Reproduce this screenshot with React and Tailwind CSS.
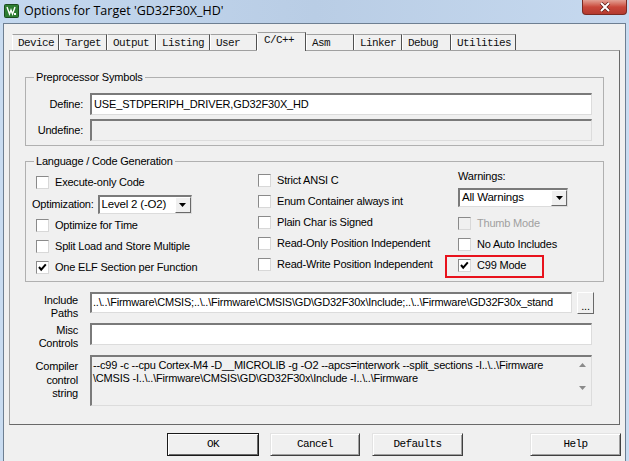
import React from "react";

const sunken =
  "border-t-2 border-l-2 border-r border-b border-t-[#7a7a7a] border-l-[#7a7a7a] border-r-[#dcdcdc] border-b-[#dcdcdc]";
const raised =
  "border border-t-[#ffffff] border-l-[#ffffff] border-r-[#696969] border-b-[#696969]";

const tabs = [
  { label: "Device", w: "w-[47px]" },
  { label: "Target", w: "w-[48px]" },
  { label: "Output", w: "w-[49px]" },
  { label: "Listing", w: "w-[54px]" },
  { label: "User", w: "w-[47px]" },
  { label: "C/C++", w: "w-[49px]", active: true },
  { label: "Asm", w: "w-[48px]" },
  { label: "Linker", w: "w-[48px]" },
  { label: "Debug", w: "w-[49px]" },
  { label: "Utilities", w: "w-[65px]" },
];

function Check({ checked = false, disabled = false, label }) {
  return (
    <div className="flex items-center h-[21px] gap-[6px]">
      <span
        className={`relative w-[13px] h-[13px] shrink-0 border border-t-[#8a8a8a] border-l-[#8a8a8a] border-r-[#d8d8d8] border-b-[#d8d8d8] ${
          disabled ? "bg-[#f0f0f0]" : "bg-white"
        }`}
      >
        {checked && (
          <svg viewBox="0 0 11 11" className="absolute inset-0 w-[11px] h-[11px]">
            <polyline points="2,5 4.2,7.6 8.8,2.4" fill="none" stroke="#000" strokeWidth="2" />
          </svg>
        )}
      </span>
      <span className={disabled ? "text-[#a0a0a0]" : "text-black"}>{label}</span>
    </div>
  );
}

function Select({ value, className }) {
  return (
    <div className={`flex h-[19px] bg-white ${sunken} ${className}`}>
      <span className="flex-1 pl-[2px] leading-[15px] text-[11.5px] tracking-[-0.2px]">{value}</span>
      <span className={`w-[16px] h-full bg-[#f0f0f0] flex items-center justify-center ${raised}`}>
        <svg viewBox="0 0 7 4" className="w-[7px] h-[4px]">
          <polygon points="0,0 7,0 3.5,4" fill="#000" />
        </svg>
      </span>
    </div>
  );
}

function Button({ label, w, def }) {
  return (
    <div
      className={`${w} h-[23px] flex items-center justify-center bg-[#f0f0f0] border font-['Liberation_Mono',monospace] text-[11px] tracking-[-0.6px] ${
        def
          ? "border-[#1a1a1a] shadow-[inset_1px_1px_0_#ffffff,inset_-1px_-1px_0_#696969]"
          : "border-t-[#e3e3e3] border-l-[#e3e3e3] border-r-[#404040] border-b-[#404040] shadow-[inset_1px_1px_0_#ffffff,inset_-1px_-1px_0_#a0a0a0]"
      }`}
    >
      {label}
    </div>
  );
}

export default function App() {
  return (
    <div className="w-[629px] h-[461px] overflow-hidden flex flex-col bg-[#c9dcf1] font-['Liberation_Sans',Arial,sans-serif] text-[11px] tracking-[-0.2px] text-black">
      {/* title bar */}
      <div className="h-[23px] shrink-0 flex items-start bg-gradient-to-r from-[#c4d8ef] via-[#b9cde5] to-[#c6d9ef]">
        <svg viewBox="0 0 15 14" className="ml-[4px] mt-[4px] w-[15px] h-[14px]">
          <rect x="0.5" y="0.5" width="14" height="13" rx="1" fill="#2e7d32" stroke="#1b4d1e" />
          <path d="M3 3 L5.5 10 L7 6 L8.5 10 L11 3" fill="none" stroke="#fff" strokeWidth="1.4" />
          <rect x="10" y="9" width="2" height="2" fill="#fff" />
        </svg>
        <span className="ml-[5px] mt-[2px] font-['Open_Sans',sans-serif] text-[12.5px] tracking-normal leading-[18px] text-black">
          Options for Target 'GD32F30X_HD'
        </span>
        <div className="ml-auto mr-[2px] w-[45px] h-[15px] rounded-b-[4px] border border-t-0 border-[#7a2a22] bg-gradient-to-b from-[#e2a095] via-[#c9473b] to-[#b43a2f] flex items-center justify-center">
          <svg viewBox="0 0 12 10" className="w-[12px] h-[10px]">
            <path d="M2 1 L10 9 M10 1 L2 9" stroke="#5a1a14" strokeWidth="3.4" />
            <path d="M2 1 L10 9 M10 1 L2 9" stroke="#fff" strokeWidth="2" />
          </svg>
        </div>
      </div>

      {/* client */}
      <div className="flex-1 mx-[3px] bg-[#f0f0f0] border-t border-x border-[#6e7f92] flex flex-col">
        {/* tabs */}
        <div className="mt-[8px] ml-[8px] h-[18px] flex items-end font-['Liberation_Mono',monospace] text-[11px] tracking-[-0.6px] text-[#111]">
          {tabs.map((t) =>
            t.active ? (
              <div
                key={t.label}
                className={`${t.w} relative z-10 -mb-px h-[19px] pl-[6px] pt-[1px] leading-[13px] bg-[#f0f0f0] border-t border-l border-r border-t-[#a0a0a0] border-l-[#ffffff] border-r-[#505050]`}
              >
                {t.label}
              </div>
            ) : (
              <div
                key={t.label}
                className={`${t.w} h-[16px] pl-[5px] pt-[1px] leading-[14px] border-t border-l border-r border-t-[#a0a0a0] border-l-[#ffffff] border-r-[#505050]`}
              >
                {t.label}
              </div>
            )
          )}
        </div>

        {/* panel */}
        <div className="mx-[5px] h-[375px] border border-t-[#a0a0a0] border-l-[#a0a0a0] border-r-[#696969] border-b-[#696969] flex flex-col">
          {/* Preprocessor Symbols */}
          <fieldset className="mx-[15px] mt-[20px] border border-[#b0b0b0] pb-[4px]">
            <legend className="ml-[8px] px-[2px] leading-[13px]">Preprocessor Symbols</legend>
            <div className="pt-[9px] flex flex-col gap-[4px]">
              <div className="flex items-center">
                <span className="w-[57px] text-right">Define:</span>
                <div className={`ml-[7px] w-[502px] h-[22px] bg-white ${sunken} pl-[2px] leading-[18px] text-[11px] tracking-[-0.15px]`}>
                  USE_STDPERIPH_DRIVER,GD32F30X_HD
                </div>
              </div>
              <div className="flex items-center">
                <span className="w-[57px] text-right">Undefine:</span>
                <div className={`ml-[7px] w-[502px] h-[22px] bg-[#f0f0f0] ${sunken}`} />
              </div>
            </div>
          </fieldset>

          {/* Language / Code Generation */}
          <fieldset className="mx-[15px] mt-[9px] border border-[#b0b0b0] pb-[3px]">
            <legend className="ml-[8px] px-[2px] leading-[13px]">Language / Code Generation</legend>
            <div className="flex">
              <div className="w-[232px] pl-[6px] pt-[4px] flex flex-col">
                <div className="pl-[4px]">
                  <Check label="Execute-only Code" />
                </div>
                <div className="h-[22px] flex items-center gap-[4px]">
                  <span>Optimization:</span>
                  <Select value="Level 2 (-O2)" className="w-[94px]" />
                </div>
                <div className="pl-[4px]">
                  <Check label="Optimize for Time" />
                  <Check label="Split Load and Store Multiple" />
                  <Check checked label="One ELF Section per Function" />
                </div>
              </div>
              <div className="w-[200px] pt-[2px] flex flex-col">
                <Check label="Strict ANSI C" />
                <Check label="Enum Container always int" />
                <Check label="Plain Char is Signed" />
                <Check label="Read-Only Position Independent" />
                <Check label="Read-Write Position Independent" />
              </div>
              <div className="flex-1 pt-[2px] flex flex-col">
                <span className="leading-[13px]">Warnings:</span>
                <Select value="All Warnings" className="mt-[5px] w-[110px]" />
                <div className="mt-[6px]">
                  <Check disabled label="Thumb Mode" />
                  <Check label="No Auto Includes" />
                  <div className="relative">
                    <Check checked label="C99 Mode" />
                    <span className="absolute -left-[13px] top-0 w-[99px] h-[23px] border-2 border-[#e8121c]" />
                  </div>
                </div>
              </div>
            </div>
          </fieldset>

          {/* include / misc / compiler */}
          <div className="mx-[15px] mt-[10px] flex flex-col">
            <div className="h-[22px] flex items-start gap-[12px]">
              <span className="w-[53px] mt-[2px] text-right leading-[13px]">
                Include
                <br />
                Paths
              </span>
              <div className={`w-[482px] h-[21px] bg-white ${sunken} pl-[1px] leading-[17px] whitespace-nowrap overflow-hidden`}>
                ..\..\Firmware\CMSIS;..\..\Firmware\CMSIS\GD\GD32F30x\Include;..\..\Firmware\GD32F30x_stand
              </div>
              <div className="-ml-[7px] w-[17px] h-[22px] bg-[#f0f0f0] flex items-end justify-center pb-[3px] leading-[8px] border border-t-[#ffffff] border-l-[#ffffff] border-r-[#696969] border-b-[#696969]">
                ...
              </div>
            </div>
            <div className="mt-[9px] h-[22px] flex items-start gap-[12px]">
              <span className="w-[53px] mt-[1px] text-right leading-[13px]">
                Misc
                <br />
                Controls
              </span>
              <div className={`w-[502px] h-[22px] bg-white ${sunken}`} />
            </div>
            <div className="mt-[10px] flex items-start gap-[12px]">
              <span className="w-[53px] mt-[5px] text-right leading-[13.5px]">
                Compiler
                <br />
                control
                <br />
                string
              </span>
              <div className={`w-[502px] h-[51px] bg-[#f0f0f0] ${sunken} flex`}>
                <div className="flex-1 pl-[1px] pt-[2px] leading-[13px] whitespace-pre overflow-hidden">
                  {"--c99 -c --cpu Cortex-M4 -D__MICROLIB -g -O2 --apcs=interwork --split_sections -I..\\..\\Firmware\n\\CMSIS -I..\\..\\Firmware\\CMSIS\\GD\\GD32F30x\\Include -I..\\..\\Firmware"}
                </div>
                <div className="w-[17px] flex flex-col items-center pt-[6px]">
                  <svg viewBox="0 0 7 4" className="w-[7px] h-[4px]">
                    <polygon points="0,4 7,4 3.5,0" fill="#8a8a8a" />
                  </svg>
                  <svg viewBox="0 0 7 4" className="mt-[19px] w-[7px] h-[4px]">
                    <polygon points="0,0 7,0 3.5,4" fill="#8a8a8a" />
                  </svg>
                </div>
              </div>
            </div>
          </div>
        </div>

        {/* buttons */}
        <div className="mt-[8px] ml-[163px] flex">
          <Button label="OK" w="w-[92px]" def />
          <div className="ml-[11px]">
            <Button label="Cancel" w="w-[90px]" />
          </div>
          <div className="ml-[12px]">
            <Button label="Defaults" w="w-[91px]" />
          </div>
          <div className="ml-[67px]">
            <Button label="Help" w="w-[91px]" />
          </div>
        </div>
      </div>
    </div>
  );
}
